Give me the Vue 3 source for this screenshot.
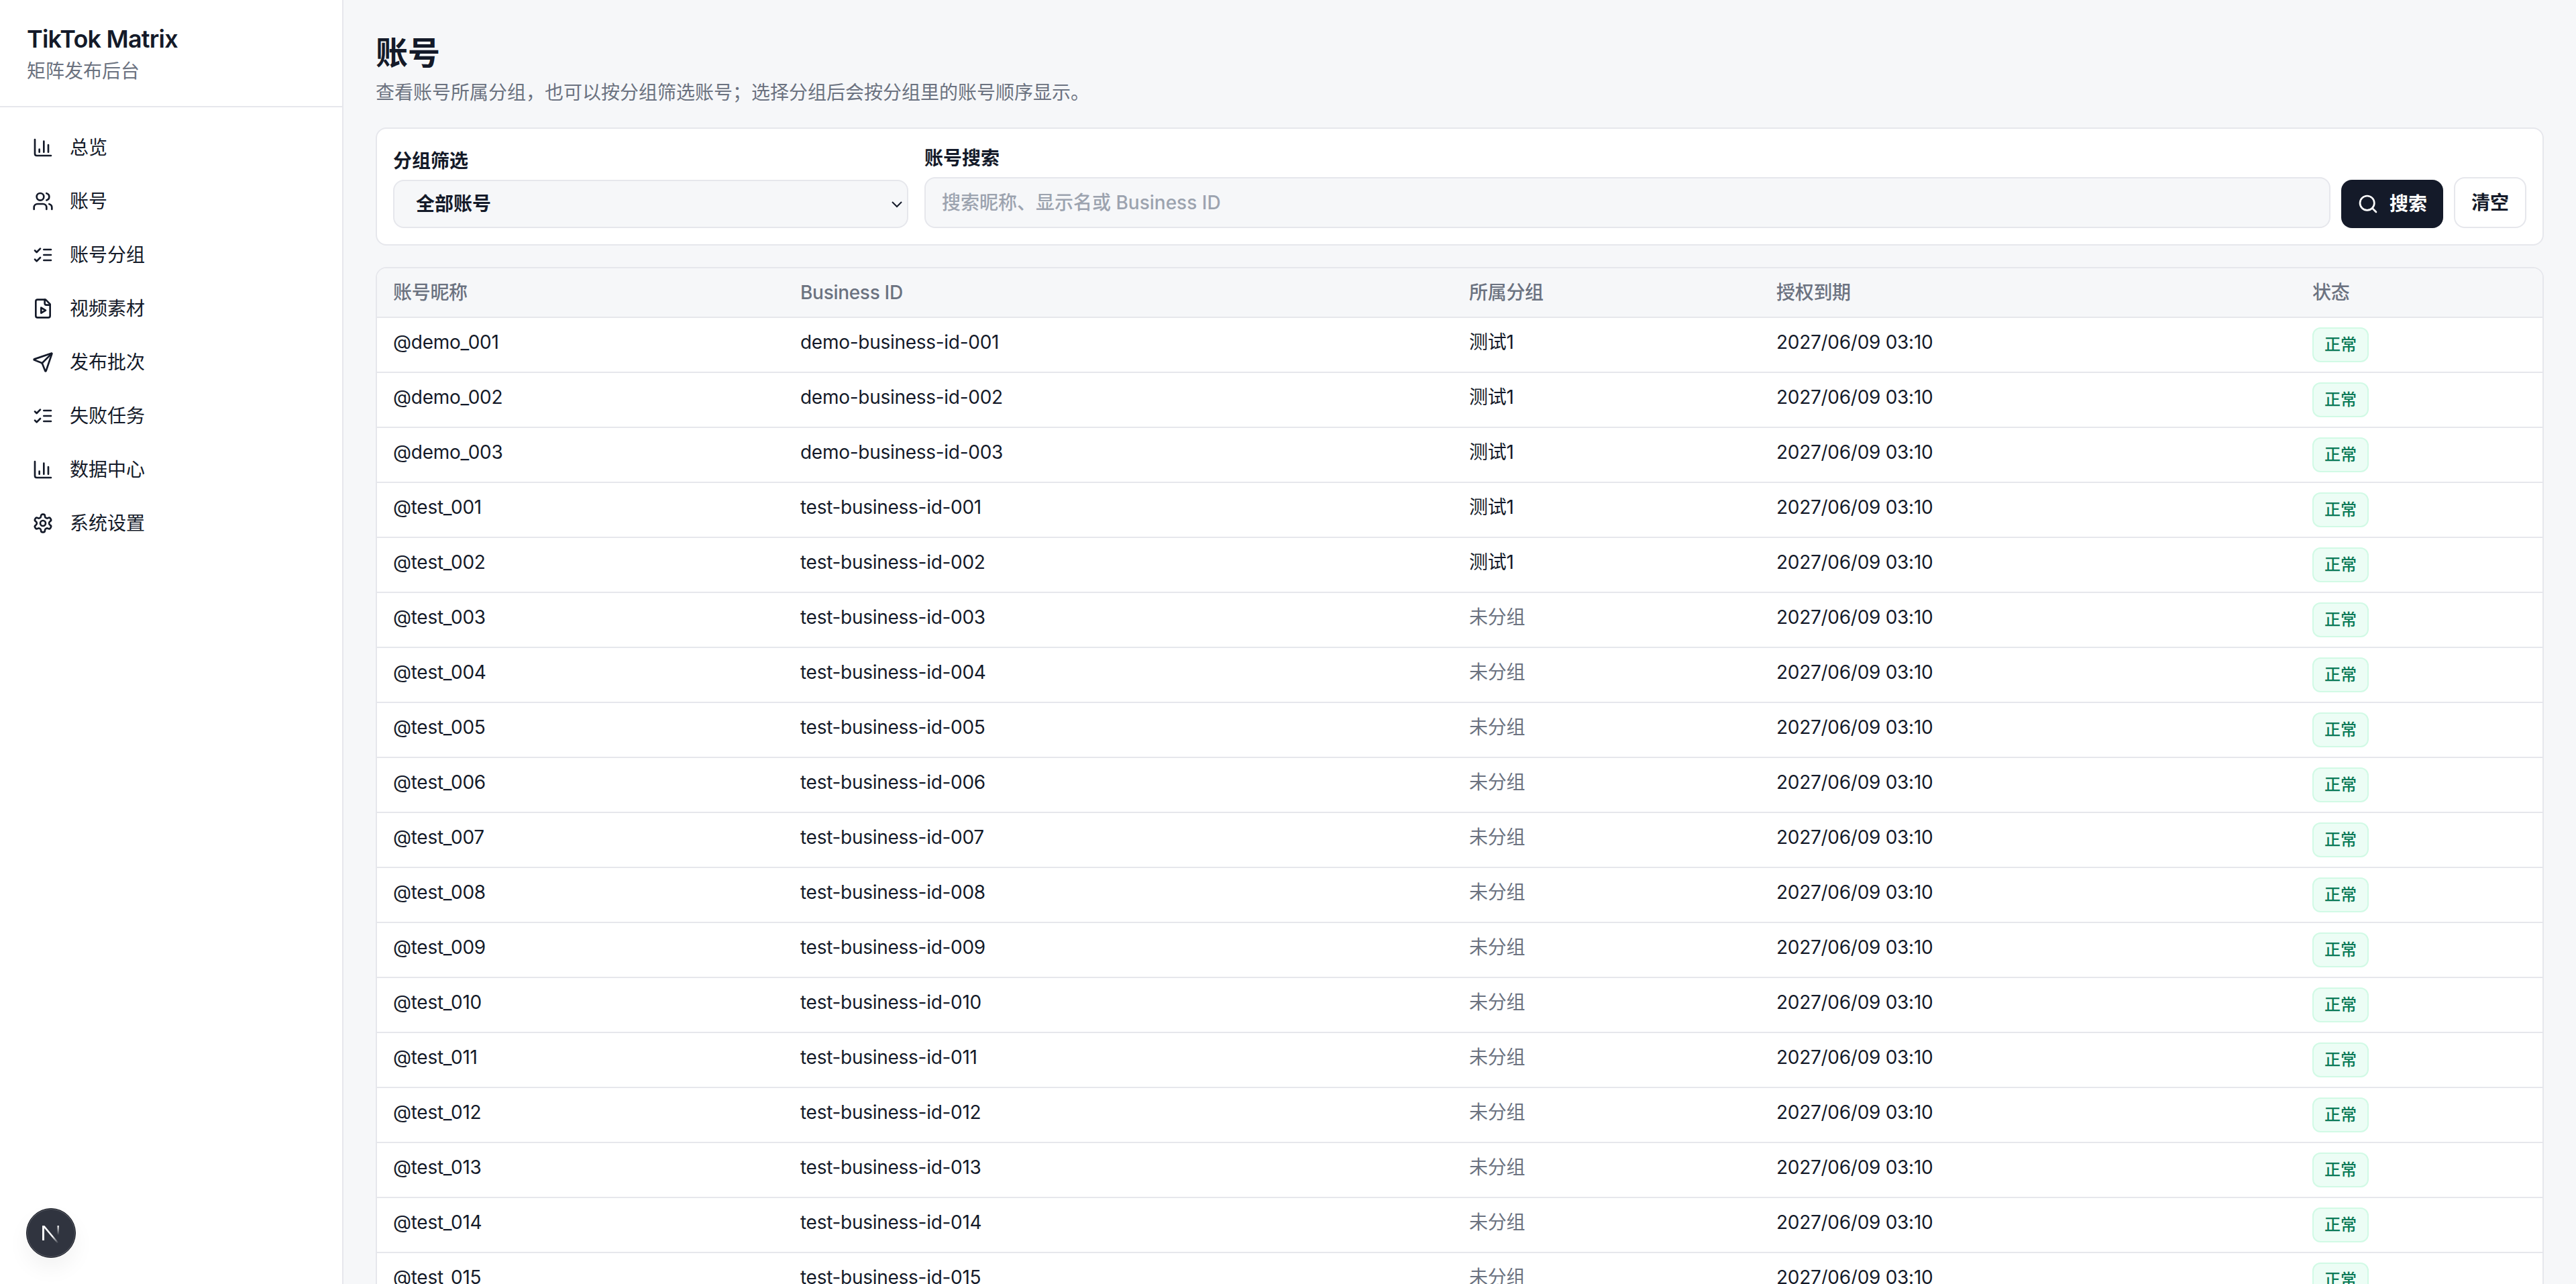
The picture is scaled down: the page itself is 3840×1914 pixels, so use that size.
<script setup>
const navItems = [
  { label: "总览", icon: "chart" },
  { label: "账号", icon: "users" },
  { label: "账号分组", icon: "checks" },
  { label: "视频素材", icon: "file" },
  { label: "发布批次", icon: "send" },
  { label: "失败任务", icon: "checks" },
  { label: "数据中心", icon: "chart" },
  { label: "系统设置", icon: "gear" },
];

const iconPaths = {
  chart: ["M3 3v16a2 2 0 0 0 2 2h16", "M18 17V9", "M13 17V5", "M8 17v-3"],
  users: [
    "M16 21v-2a4 4 0 0 0-4-4H6a4 4 0 0 0-4 4v2",
    "M9 3a4 4 0 1 0 0 8a4 4 0 1 0 0-8z",
    "M22 21v-2a4 4 0 0 0-3-3.87",
    "M16 3.13a4 4 0 0 1 0 7.75",
  ],
  checks: ["m3 17 2 2 4-4", "m3 7 2 2 4-4", "M13 6h8", "M13 12h8", "M13 18h8"],
  file: [
    "M15 2H6a2 2 0 0 0-2 2v16a2 2 0 0 0 2 2h12a2 2 0 0 0 2-2V7Z",
    "M14 2v4a2 2 0 0 0 2 2h4",
    "m10 11 5 3-5 3v-6Z",
  ],
  send: [
    "M14.536 21.686a.5.5 0 0 0 .937-.024l6.5-19a.496.496 0 0 0-.635-.635l-19 6.5a.5.5 0 0 0-.024.937l7.93 3.18a2 2 0 0 1 1.112 1.11z",
    "m21.854 2.147-10.94 10.939",
  ],
  gear: [
    "M12.22 2h-.44a2 2 0 0 0-2 2v.18a2 2 0 0 1-1 1.73l-.43.25a2 2 0 0 1-2 0l-.15-.08a2 2 0 0 0-2.73.73l-.22.38a2 2 0 0 0 .73 2.73l.15.1a2 2 0 0 1 1 1.72v.51a2 2 0 0 1-1 1.74l-.15.09a2 2 0 0 0-.73 2.73l.22.38a2 2 0 0 0 2.73.73l.15-.08a2 2 0 0 1 2 0l.43.25a2 2 0 0 1 1 1.73V20a2 2 0 0 0 2 2h.44a2 2 0 0 0 2-2v-.18a2 2 0 0 1 1-1.73l.43-.25a2 2 0 0 1 2 0l.15.08a2 2 0 0 0 2.73-.73l.22-.39a2 2 0 0 0-.73-2.73l-.15-.08a2 2 0 0 1-1-1.74v-.5a2 2 0 0 1 1-1.74l.15-.09a2 2 0 0 0 .73-2.73l-.22-.38a2 2 0 0 0-2.73-.73l-.15.08a2 2 0 0 1-2 0l-.43-.25a2 2 0 0 1-1-1.73V4a2 2 0 0 0-2-2z",
    "M12 9a3 3 0 1 0 0 6a3 3 0 1 0 0-6z",
  ],
};

const columns = ["账号昵称", "Business ID", "所属分组", "授权到期", "状态"];

function pad(n) {
  return String(n).padStart(3, "0");
}

const accounts = [];
for (let i = 1; i <= 3; i++) {
  accounts.push({ name: `@demo_${pad(i)}`, id: `demo-business-id-${pad(i)}`, group: "测试1" });
}
for (let i = 1; i <= 15; i++) {
  accounts.push({
    name: `@test_${pad(i)}`,
    id: `test-business-id-${pad(i)}`,
    group: i <= 2 ? "测试1" : "未分组",
  });
}
</script>

<template>
  <div class="layout">
    <aside class="sidebar">
      <div class="brand">
        <div class="brand-name">TikTok Matrix</div>
        <div class="brand-sub">矩阵发布后台</div>
      </div>
      <nav class="nav">
        <a v-for="item in navItems" :key="item.label" class="nav-link">
          <svg class="icon" viewBox="0 0 24 24">
            <path v-for="d in iconPaths[item.icon]" :key="d" :d="d" />
          </svg>
          <span>{{ item.label }}</span>
        </a>
      </nav>
      <div class="dev-badge">
        <svg width="30" height="30" viewBox="0 0 30 30">
          <defs>
            <linearGradient id="n-diag" x1="0.3" y1="0.3" x2="0.95" y2="1">
              <stop offset="0.45" stop-color="#fff" />
              <stop offset="1" stop-color="#fff" stop-opacity="0" />
            </linearGradient>
            <linearGradient id="n-stem" x1="0" y1="0" x2="0" y2="1">
              <stop offset="0" stop-color="#fff" stop-opacity="0.9" />
              <stop offset="1" stop-color="#fff" stop-opacity="0" />
            </linearGradient>
          </defs>
          <rect x="2" y="4" width="3" height="22" fill="#fff" />
          <polygon points="2,4 5.4,4 27,30 24,30" fill="url(#n-diag)" />
          <rect x="24.4" y="4" width="2.6" height="14" fill="url(#n-stem)" />
        </svg>
      </div>
    </aside>

    <main class="main">
      <h1 class="page-title">账号</h1>
      <p class="page-desc">查看账号所属分组，也可以按分组筛选账号；选择分组后会按分组里的账号顺序显示。</p>

      <section class="card filters">
        <div class="field field-group">
          <label class="field-label">分组筛选</label>
          <div class="select-wrap">
            <select class="select">
              <option>全部账号</option>
            </select>
            <svg class="chevron" viewBox="0 0 18 12">
              <path d="M2 2l7 7 7-7" />
            </svg>
          </div>
        </div>
        <div class="field field-search">
          <label class="field-label">账号搜索</label>
          <input class="input" placeholder="搜索昵称、显示名或 Business ID" />
        </div>
        <button class="btn btn-primary">
          <svg class="icon" viewBox="0 0 24 24">
            <circle cx="11" cy="11" r="8" />
            <path d="m21 21-4.3-4.3" />
          </svg>
          搜索
        </button>
        <button class="btn btn-ghost">清空</button>
      </section>

      <section class="card table-card">
        <table class="table">
          <colgroup>
            <col class="col-name" />
            <col class="col-id" />
            <col class="col-group" />
            <col class="col-date" />
            <col class="col-status" />
          </colgroup>
          <thead>
            <tr>
              <th v-for="col in columns" :key="col">{{ col }}</th>
            </tr>
          </thead>
          <tbody>
            <tr v-for="row in accounts" :key="row.name">
              <td>{{ row.name }}</td>
              <td>{{ row.id }}</td>
              <td :class="{ muted: row.group === '未分组' }">{{ row.group }}</td>
              <td>2027/06/09 03:10</td>
              <td class="status-cell"><span class="badge">正常</span></td>
            </tr>
          </tbody>
        </table>
      </section>
    </main>
  </div>
</template>

<style>
html,
body {
  margin: 0;
  overflow: hidden;
}
</style>

<style scoped>
.layout {
  display: flex;
  height: 100vh;
  overflow: hidden;
  background: #f6f7f9;
  color: #141a29;
  font-family: Inter, "Noto Sans CJK SC", sans-serif;
  font-size: 28px;
  line-height: 40px;
}

.sidebar {
  position: relative;
  flex: none;
  box-sizing: border-box;
  width: 512px;
  background: #fff;
  border-right: 2px solid #e6e7ec;
}

.brand {
  padding: 30px 40px 32px;
  border-bottom: 2px solid #e6e7ec;
}

.brand-name {
  font-size: 36px;
  line-height: 56px;
  font-weight: 600;
  letter-spacing: -0.8px;
}

.brand-sub {
  color: #6b7280;
}

.nav {
  display: flex;
  flex-direction: column;
  gap: 8px;
  padding: 24px;
}

.nav-link {
  display: flex;
  align-items: center;
  gap: 24px;
  padding: 16px 24px;
}

.icon {
  flex: none;
  width: 32px;
  height: 32px;
  fill: none;
  stroke: currentColor;
  stroke-width: 2;
  stroke-linecap: round;
  stroke-linejoin: round;
}

.dev-badge {
  position: absolute;
  left: 39px;
  top: 1801px;
  display: flex;
  align-items: center;
  justify-content: center;
  box-sizing: border-box;
  width: 74px;
  height: 74px;
  border-radius: 50%;
  background: #30343f;
  border: 1px solid #141720;
  box-shadow: inset 0 0 0 1px rgba(255, 255, 255, 0.2), 0 16px 32px rgba(0, 0, 0, 0.05);
}

.main {
  flex: 1;
  min-width: 0;
  padding: 47px 48px 0;
}

.page-title {
  margin: 0;
  font-size: 48px;
  line-height: 64px;
  font-weight: 700;
}

.page-desc {
  margin: 7px 0 32px;
  color: #6b7280;
}

.card {
  background: #fff;
  border: 2px solid #e6e7ec;
  border-radius: 16px;
}

.filters {
  display: flex;
  align-items: flex-end;
  gap: 16px;
  padding: 24px;
}

.field-label {
  display: block;
  margin-bottom: 8px;
  font-weight: 600;
}

.field-group {
  flex: none;
  width: 768px;
  margin-right: 8px;
}

.field-search {
  flex: 1;
}

.select-wrap {
  position: relative;
}

.select {
  display: block;
  box-sizing: border-box;
  width: 100%;
  height: 72px;
  padding: 0 32px;
  appearance: none;
  background: #f6f7f9;
  border: 2px solid #e6e7ec;
  border-radius: 16px;
  color: inherit;
  font: inherit;
  font-weight: 600;
}

.chevron {
  position: absolute;
  right: 8px;
  top: 31px;
  width: 18px;
  height: 12px;
  fill: none;
  stroke: #141a29;
  stroke-width: 2;
}

.input {
  display: block;
  box-sizing: border-box;
  width: 100%;
  height: 76px;
  padding: 0 24px;
  background: #f6f7f9;
  border: 2px solid #e6e7ec;
  border-radius: 16px;
  color: inherit;
  font: inherit;
  font-weight: 500;
}

.input::placeholder {
  color: #9ca3af;
  opacity: 1;
}

.btn {
  display: flex;
  align-items: center;
  justify-content: center;
  flex: none;
  box-sizing: border-box;
  font: inherit;
  font-weight: 600;
  border-radius: 16px;
}

.btn-primary {
  gap: 16px;
  width: 152px;
  height: 72px;
  background: #141a29;
  border: 0;
  color: #fff;
}

.btn-ghost {
  width: 108px;
  height: 76px;
  background: #fff;
  border: 2px solid #e6e7ec;
  color: #141a29;
}

.table-card {
  margin-top: 32px;
  overflow: hidden;
}

.table {
  width: 100%;
  table-layout: fixed;
  border-collapse: separate;
  border-spacing: 0;
}

.col-name {
  width: 607px;
}

.col-id {
  width: 997px;
}

.col-group {
  width: 458px;
}

.col-date {
  width: 799px;
}

.col-status {
  width: 367px;
}

th {
  box-sizing: border-box;
  height: 74px;
  padding: 0 24px;
  background: #f6f7f9;
  border-bottom: 2px solid #e6e7ec;
  color: #6b7280;
  font-weight: 500;
  letter-spacing: -0.3px;
  text-align: left;
}

td {
  box-sizing: border-box;
  height: 82px;
  padding: 16px 24px 0;
  border-bottom: 2px solid #e6e7ec;
  letter-spacing: -0.28px;
  vertical-align: top;
}

.muted {
  color: #6b7280;
}

.status-cell {
  padding-top: 14px;
}

.badge {
  display: block;
  box-sizing: border-box;
  width: 84px;
  height: 52px;
  background: #ecfdf5;
  border: 2px solid #d1fae5;
  border-radius: 12px;
  color: #0b7a57;
  font-size: 24px;
  font-weight: 500;
  letter-spacing: 0;
  line-height: 48px;
  text-align: center;
}
</style>
